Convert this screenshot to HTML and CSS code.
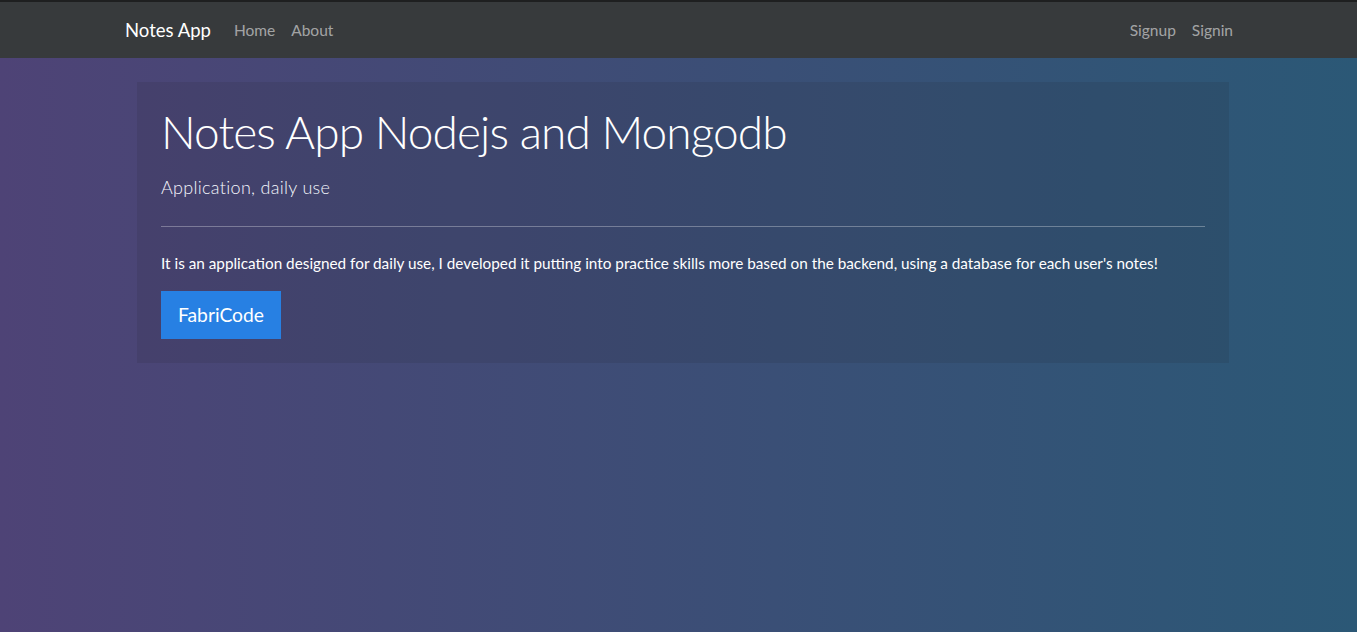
FILE: index.html
```html
<!DOCTYPE html>
<html lang="en">
<head>
<meta charset="utf-8">
<title>Notes App</title>
<link rel="stylesheet" href="styles.css">
</head>
<body>
<nav class="navbar">
  <div class="nav-inner">
    <a class="brand" href="#">Notes App</a>
    <ul class="nav-links">
      <li><a href="#">Home</a></li>
      <li><a href="#">About</a></li>
    </ul>
    <ul class="nav-links nav-right">
      <li><a href="#">Signup</a></li>
      <li><a href="#">Signin</a></li>
    </ul>
  </div>
</nav>
<main class="page">
  <section class="jumbotron">
    <h1 class="title">Notes App Nodejs and Mongodb</h1>
    <p class="lead">Application, daily use</p>
    <hr class="divider">
    <p class="text">It is an application designed for daily use, I developed it putting into practice skills more based on the backend, using a database for each user's notes!</p>
    <a class="btn" href="#">FabriCode</a>
  </section>
</main>
</body>
</html>
```

FILE: styles.css
```css
* { box-sizing: border-box; }
html, body { height: 100%; }
body {
  margin: 0;
  font-family: Lato, "Noto Sans", sans-serif;
  color: #fff;
  background: linear-gradient(to right, #4e4376, #2b5876);
}
a { text-decoration: none; }
.navbar {
  background: #373a3c;
  border-top: 2px solid #1e1f20;
  height: 58px;
}
.nav-inner {
  height: 100%;
  display: flex;
  align-items: center;
  padding: 0 124px 1px 125px;
}
.brand {
  color: #fff;
  font-size: 18.5px;
  margin-right: 23px;
}
.nav-links {
  list-style: none;
  display: flex;
  gap: 16px;
  margin: 0;
  padding: 0;
  font-size: 15.5px;
}
.nav-links a { color: rgba(255,255,255,0.55); }
.nav-right { margin-left: auto; }
.page {
  padding: 24px 128px 0 137px;
}
.jumbotron {
  background: rgba(30, 35, 45, 0.12);
  padding: 22px 24px 24px 24px;
}
.title {
  margin: 0;
  font-size: 46px;
  font-weight: 300;
  letter-spacing: -0.9px;
  line-height: 1.2;
}
.lead {
  margin: 15px 0 0;
  font-size: 18px;
  font-weight: 300;
  letter-spacing: 0.3px;
  line-height: 1.5;
  color: #f4f6fc;
}
.divider {
  border: 0;
  border-top: 1px solid rgba(255,255,255,0.3);
  margin: 25px 0 25px;
}
.text {
  margin: 0 0 16px;
  font-size: 15.3px;
  line-height: 23px;
}
.btn {
  display: inline-block;
  background: #2780e3;
  color: #fff;
  font-size: 19.3px;
  line-height: 30px;
  padding: 9px 17px;
}
```
